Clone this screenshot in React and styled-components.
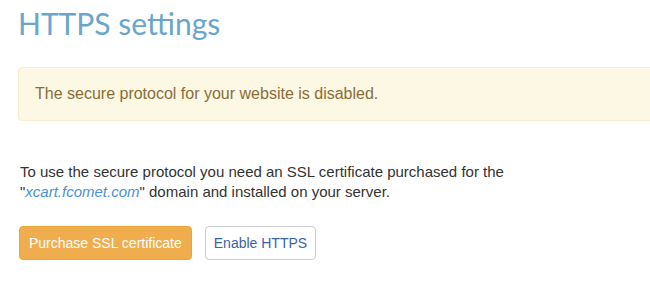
import React from "react";
import styled, { createGlobalStyle } from "styled-components";

const Global = createGlobalStyle`
  html, body { margin: 0; padding: 0; background: #fff; overflow: hidden; }
  body { font-family: "Liberation Sans", Arial, sans-serif; }
`;

const Page = styled.div`
  width: 720px;
  padding: 5px 0 0 18px;
  box-sizing: border-box;
`;

const Title = styled.h1`
  margin: 0;
  font-family: "Lato", "DejaVu Sans", sans-serif;
  font-weight: 400;
  font-size: 30px;
  line-height: 36px;
  color: #69a5cc;
`;

const Alert = styled.div`
  margin-top: 26px;
  padding: 15px 16px;
  background: #fcf8e3;
  border: 1px solid #faebcc;
  border-radius: 4px;
  color: #8a6d3b;
  font-size: 16px;
  line-height: 22px;
`;

const Text = styled.p`
  margin: 41px 0 0 2px;
  color: #333;
  font-size: 15px;
  line-height: 20px;
`;

const Link = styled.a`
  color: #4a92d4;
  font-style: italic;
  text-decoration: none;
`;

const Actions = styled.div`
  display: flex;
  gap: 13px;
  margin: 24px 0 0 1px;
`;

const Button = styled.button`
  font-family: "Liberation Sans", Arial, sans-serif;
  font-size: 14px;
  line-height: 20px;
  height: 34px;
  padding: 6px ${(p) => (p.$primary ? "9px" : "8px")};
  border-radius: 4px;
  cursor: pointer;
  border: 1px solid ${(p) => (p.$primary ? "#eea236" : "#ccc")};
  background: ${(p) => (p.$primary ? "#f0ad4e" : "#fff")};
  color: ${(p) => (p.$primary ? "#fff" : "#3a63a8")};
`;

export default function App() {
  return (
    <>
      <Global />
      <Page>
        <Title>HTTPS settings</Title>
        <Alert>The secure protocol for your website is disabled.</Alert>
        <Text>
          To use the secure protocol you need an SSL certificate purchased for the
          <br />"<Link href="#">xcart.fcomet.com</Link>" domain and installed on your server.
        </Text>
        <Actions>
          <Button $primary>Purchase SSL certificate</Button>
          <Button>Enable HTTPS</Button>
        </Actions>
      </Page>
    </>
  );
}
